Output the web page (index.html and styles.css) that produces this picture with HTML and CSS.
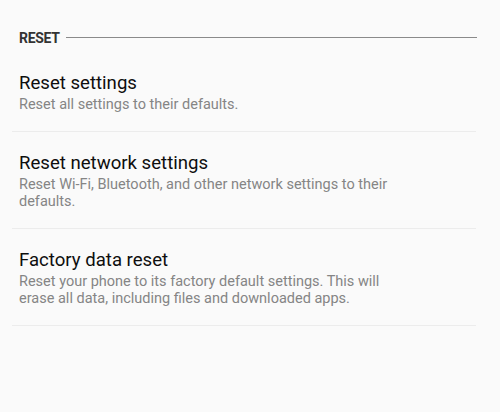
FILE: index.html
```html
<!DOCTYPE html>
<html>
<head>
<meta charset="utf-8">
<link rel="stylesheet" href="styles.css">
</head>
<body>
<div class="screen">
  <div class="section-header">
    <span class="section-title">RESET</span>
    <span class="section-line"></span>
  </div>
  <ul class="list">
    <li class="item">
      <div class="item-title">Reset settings</div>
      <div class="item-sub">Reset all settings to their defaults.</div>
    </li>
    <li class="item">
      <div class="item-title">Reset network settings</div>
      <div class="item-sub">Reset Wi-Fi, Bluetooth, and other network settings to their defaults.</div>
    </li>
    <li class="item">
      <div class="item-title">Factory data reset</div>
      <div class="item-sub">Reset your phone to its factory default settings. This will erase all data, including files and downloaded apps.</div>
    </li>
  </ul>
</div>
</body>
</html>
```

FILE: styles.css
```css
html, body {
  margin: 0;
  padding: 0;
  background: #fafafa;
}
.screen {
  width: 500px;
  height: 412px;
  background: #fafafa;
  font-family: Roboto, "Noto Sans", sans-serif;
}
.section-header {
  display: flex;
  align-items: center;
  padding: 30px 23px 0 19px;
  height: 16px;
}
.section-title {
  font-size: 14px;
  line-height: 16px;
  font-weight: 700;
  color: #333;
  letter-spacing: -0.3px;
}
.section-line {
  flex: 1;
  height: 1px;
  background: #8a8a8a;
  margin-left: 6px;
  margin-top: -2px;
}
.list {
  list-style: none;
  margin: 7px 24px 0 12px;
  padding: 0;
}
.item {
  padding: 21px 0 18px 7px;
  border-bottom: 1px solid #ececec;
}
.item:first-child {
  padding-top: 20px;
}
.item-title {
  font-size: 18.6px;
  line-height: 20px;
  color: #0e0e0e;
}
.item-sub {
  font-size: 14.5px;
  line-height: 17px;
  color: #858585;
  margin-top: 3px;
  max-width: 380px;
}
```
